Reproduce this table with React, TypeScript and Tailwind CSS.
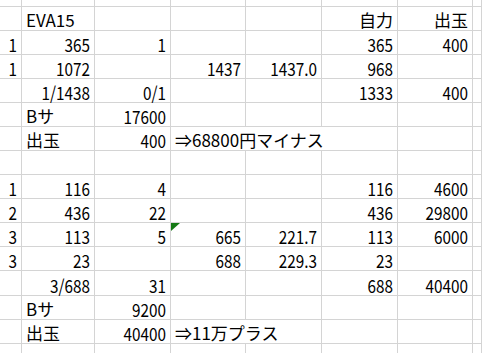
type Cell = { t?: string; left?: boolean; span?: number; tri?: boolean; cjk?: boolean };

const rows: { h: string; cells: Cell[] }[] = [
  { h: 'h-[24px]', cells: [{}, { t: 'EVA15', left: true, cjk: true }, {}, {}, {}, { t: '自力', cjk: true }, { t: '出玉', cjk: true }, {}] },
  { h: 'h-[24px]', cells: [{ t: '1' }, { t: '365' }, { t: '1' }, {}, {}, { t: '365' }, { t: '400' }, {}] },
  { h: 'h-[24px]', cells: [{ t: '1' }, { t: '1072' }, {}, { t: '1437' }, { t: '1437.0' }, { t: '968' }, {}, {}] },
  { h: 'h-[24px]', cells: [{}, { t: '1/1438' }, { t: '0/1' }, {}, {}, { t: '1333' }, { t: '400' }, {}] },
  { h: 'h-[24px]', cells: [{}, { t: 'Bサ', left: true, cjk: true }, { t: '17600' }, {}, {}, {}, {}, {}] },
  { h: 'h-[24px]', cells: [{}, { t: '出玉', left: true, cjk: true }, { t: '400' }, { t: '⇒68800円マイナス', left: true, span: 3, cjk: true }, {}, {}] },
  { h: 'h-[24px]', cells: [{}, {}, {}, {}, {}, {}, {}, {}] },
  { h: 'h-[24px]', cells: [{ t: '1' }, { t: '116' }, { t: '4' }, {}, {}, { t: '116' }, { t: '4600' }, {}] },
  { h: 'h-[24px]', cells: [{ t: '2' }, { t: '436' }, { t: '22' }, {}, {}, { t: '436' }, { t: '29800' }, {}] },
  { h: 'h-[24px]', cells: [{ t: '3' }, { t: '113' }, { t: '5' }, { t: '665', tri: true }, { t: '221.7' }, { t: '113' }, { t: '6000' }, {}] },
  { h: 'h-[24px]', cells: [{ t: '3' }, { t: '23' }, {}, { t: '688' }, { t: '229.3' }, { t: '23' }, {}, {}] },
  { h: 'h-[25px]', cells: [{}, { t: '3/688' }, { t: '31' }, {}, {}, { t: '688' }, { t: '40400' }, {}] },
  { h: 'h-[24px]', cells: [{}, { t: 'Bサ', left: true, cjk: true }, { t: '9200' }, {}, {}, {}, {}, {}] },
  { h: 'h-[24px]', cells: [{}, { t: '出玉', left: true, cjk: true }, { t: '40400' }, { t: '⇒11万プラス', left: true, span: 2, cjk: true }, {}, {}, {}] },
];

const spanClass: Record<number, string> = { 1: '', 2: 'col-span-2', 3: 'col-span-3' };

export default function App() {
  return (
    <div
      className="w-[482px] h-[353px] overflow-hidden bg-white text-black"
      style={{ fontFamily: '"Noto Sans CJK JP", "Noto Sans", sans-serif' }}
    >
      <div className="grid grid-cols-[22px_73px_76px_75px_76px_76px_75px_1fr]">
        {/* partial top row */}
        {Array.from({ length: 8 }).map((_, i) => (
          <div key={'top' + i} className="h-[7px] border-r border-b border-[#d4d4d4]" />
        ))}
        {rows.map((row, r) =>
          row.cells.map((c, i) => (
            <div
              key={r + '-' + i}
              className={`relative ${row.h} ${spanClass[c.span ?? 1]} border-r border-b border-[#d4d4d4] flex items-end pb-[1px] whitespace-nowrap leading-[18px] ${
                c.left ? 'justify-start pl-[4px]' : 'justify-end pr-[4px]'
              }`}
            >
              {c.tri && (
                <div className="absolute left-0 top-0 w-0 h-0 border-t-[8px] border-r-[9px] border-t-[#157a15] border-r-transparent" />
              )}
              {c.t &&
                (c.cjk ? (
                  <span className="text-[17px]">{c.t}</span>
                ) : (
                  <span className="inline-block text-[18px] scale-x-[0.85] origin-right">{c.t}</span>
                ))}
            </div>
          )),
        )}
        {Array.from({ length: 8 }).map((_, i) => (
          <div key={'bot' + i} className="h-[24px] border-r border-b border-[#d4d4d4]" />
        ))}
      </div>
    </div>
  );
}
